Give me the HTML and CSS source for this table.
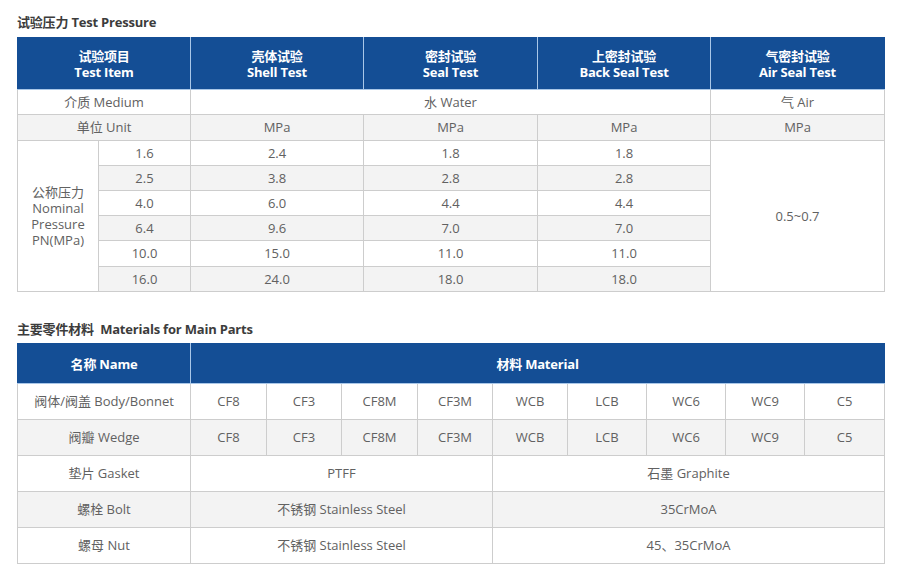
FILE: index.html
```html
<!DOCTYPE html>
<html lang="zh">
<head>
<meta charset="utf-8">
<title>Test Pressure / Materials</title>
<link rel="stylesheet" href="styles.css">
</head>
<body>
<div class="page">
  <h2 class="title">试验压力 Test Pressure</h2>
  <table class="spec pressure">
    <colgroup>
      <col class="c81"><col class="c92"><col class="c173"><col class="c174"><col class="c173"><col class="c174">
    </colgroup>
    <thead>
      <tr>
        <th colspan="2">试验项目<br>Test Item</th>
        <th>壳体试验<br>Shell Test</th>
        <th>密封试验<br>Seal Test</th>
        <th>上密封试验<br>Back Seal Test</th>
        <th>气密封试验<br>Air Seal Test</th>
      </tr>
    </thead>
    <tbody>
      <tr class="r25">
        <td colspan="2">介质 Medium</td>
        <td colspan="3">水 Water</td>
        <td>气 Air</td>
      </tr>
      <tr class="r26 alt">
        <td colspan="2">单位 Unit</td>
        <td>MPa</td><td>MPa</td><td>MPa</td><td>MPa</td>
      </tr>
      <tr class="r25">
        <td rowspan="6" class="plain nominal">公称压力<br>Nominal<br>Pressure<br>PN(MPa)</td>
        <td>1.6</td><td>2.4</td><td>1.8</td><td>1.8</td>
        <td rowspan="6" class="plain">0.5~0.7</td>
      </tr>
      <tr class="r25 alt"><td>2.5</td><td>3.8</td><td>2.8</td><td>2.8</td></tr>
      <tr class="r25"><td>4.0</td><td>6.0</td><td>4.4</td><td>4.4</td></tr>
      <tr class="r25 alt"><td>6.4</td><td>9.6</td><td>7.0</td><td>7.0</td></tr>
      <tr class="r26"><td>10.0</td><td>15.0</td><td>11.0</td><td>11.0</td></tr>
      <tr class="r25 alt"><td>16.0</td><td>24.0</td><td>18.0</td><td>18.0</td></tr>
    </tbody>
  </table>

  <h2 class="title second">主要零件材料&nbsp; Materials for Main Parts</h2>
  <table class="spec materials">
    <colgroup>
      <col class="c173"><col class="c76"><col class="c75"><col class="c76"><col class="c75"><col class="c75"><col class="c79"><col class="c79"><col class="c79"><col class="c80">
    </colgroup>
    <thead>
      <tr>
        <th>名称 Name</th>
        <th colspan="9">材料 Material</th>
      </tr>
    </thead>
    <tbody>
      <tr class="r36">
        <td>阀体/阀盖 Body/Bonnet</td>
        <td>CF8</td><td>CF3</td><td>CF8M</td><td>CF3M</td><td>WCB</td><td>LCB</td><td>WC6</td><td>WC9</td><td>C5</td>
      </tr>
      <tr class="r36 alt">
        <td>阀瓣 Wedge</td>
        <td>CF8</td><td>CF3</td><td>CF8M</td><td>CF3M</td><td>WCB</td><td>LCB</td><td>WC6</td><td>WC9</td><td>C5</td>
      </tr>
      <tr class="r36">
        <td>垫片 Gasket</td>
        <td colspan="4">PTFF</td>
        <td colspan="5">石墨 Graphite</td>
      </tr>
      <tr class="r36 alt">
        <td>螺栓 Bolt</td>
        <td colspan="4">不锈钢 Stainless Steel</td>
        <td colspan="5">35CrMoA</td>
      </tr>
      <tr class="r36">
        <td>螺母 Nut</td>
        <td colspan="4">不锈钢 Stainless Steel</td>
        <td colspan="5">45、35CrMoA</td>
      </tr>
    </tbody>
  </table>
</div>
</body>
</html>
```

FILE: styles.css
```css
html, body {
  margin: 0;
  padding: 0;
  background: #ffffff;
}

.page {
  padding: 14px 16px 0 17px;
  font-family: "Open Sans", "Noto Sans CJK SC", sans-serif;
  color: #616161;
}

.title {
  margin: 0;
  font-size: 13px;
  line-height: 16px;
  font-weight: 700;
  color: #3c3c3c;
  letter-spacing: -0.2px;
}

.title.second {
  margin-top: 29px;
}

.spec {
  width: 867px;
  table-layout: fixed;
  border-collapse: collapse;
  margin-top: 7px;
  font-size: 13px;
}

.materials {
  margin-top: 6px;
}

.c81 { width: 81px; }
.c92 { width: 92px; }
.c173 { width: 173px; }
.c174 { width: 174px; }
.c75 { width: 75px; }
.c76 { width: 76px; }
.c79 { width: 79px; }
.c80 { width: 80px; }

.spec th {
  background: #144e95;
  color: #ffffff;
  font-weight: 700;
  line-height: 16px;
  padding: 0;
  border: 1px solid #a9c7e8;
  border-top-color: #144e95;
  letter-spacing: -0.2px;
}

.spec th:first-child { border-left-color: #144e95; }
.spec th:last-child { border-right-color: #144e95; }

.pressure thead tr { height: 52px; }
.materials thead tr { height: 40px; }

.spec td {
  border: 1px solid #cdcdcd;
  text-align: center;
  padding: 0;
  line-height: 15px;
  background: #ffffff;
}

.spec tr.alt td { background: #f3f3f3; }
.spec tr.alt td.plain,
.spec td.plain { background: #ffffff; }

.r25 { height: 25px; }
.r26 { height: 26px; }
.r36 { height: 36px; }

.spec td.nominal {
  line-height: 16px;
}
```
